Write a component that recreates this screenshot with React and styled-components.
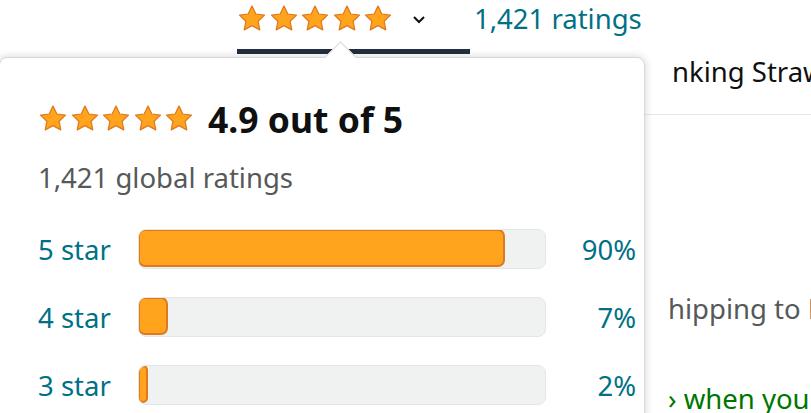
import React from 'react'
import styled, { createGlobalStyle } from 'styled-components'

const Global = createGlobalStyle`
  body { margin: 0; font-family: "Noto Sans", "Liberation Sans", sans-serif; color: #0f1111; }
`

const ratings = [
  { label: '5 star', pct: 90 },
  { label: '4 star', pct: 7 },
  { label: '3 star', pct: 2 },
]

const Star = ({ size = 30 }) => (
  <svg width={size} height={size} viewBox="0 0 24 24">
    <path
      d="M12 1.6l3.05 6.4 6.95.9-5.1 4.85 1.3 6.95L12 17.3l-6.2 3.4 1.3-6.95L2 8.9l6.95-.9z"
      fill="#ffa41c"
      stroke="#de7921"
      strokeWidth="1"
      strokeLinejoin="round"
    />
  </svg>
)

const Stars = ({ size }) => (
  <StarRow>
    {[0, 1, 2, 3, 4].map(i => <Star key={i} size={size} />)}
  </StarRow>
)

const Page = styled.div`
  position: relative;
  width: 811px;
  height: 413px;
  overflow: hidden;
  background: #fff;
`

const TopRow = styled.div`
  display: flex;
  align-items: flex-start;
  height: 57px;
  padding-left: 237px;
  box-sizing: border-box;
`

const Trigger = styled.div`
  width: 233px;
  display: flex;
  flex-direction: column;
`

const TriggerInner = styled.div`
  display: flex;
  align-items: center;
  height: 37px;
`

const Chevron = styled.svg`
  margin-left: 19px;
  margin-top: 2px;
`

const DarkBar = styled.div`
  margin-top: 12px;
  height: 5px;
  background: #232f3e;
`

const Link = styled.a`
  color: #007185;
  font-size: 27.5px;
  text-decoration: none;
  margin-left: 4px;
  line-height: 37px;
`

const StarRow = styled.div`
  display: flex;
  gap: 1.5px;
`

const Body = styled.div`
  padding-left: 672px;
  display: flex;
  flex-direction: column;
`

const Title = styled.div`
  font-size: 27.5px;
  line-height: 30px;
  white-space: nowrap;
  height: 57px;
  border-bottom: 1px solid #e7e7e7;
  margin-left: -27px;
  padding-left: 27px;
`

const Note = styled.div`
  font-size: 27.5px;
  white-space: nowrap;
  margin-left: -4px;
  color: ${p => p.$green ? '#007600' : '#565959'};
  margin-top: ${p => p.$top}px;
`

const Popover = styled.div`
  position: absolute;
  left: -1px;
  top: 57px;
  width: 646px;
  height: 420px;
  box-sizing: border-box;
  background: #fff;
  border: 1px solid #d5d9d9;
  border-radius: 8px;
  box-shadow: 0 0 8px rgba(15, 17, 17, 0.18);
  padding: 45px 8px 0 38px;
`

const Notch = styled.div`
  position: absolute;
  left: 329px;
  top: -12px;
  width: 22px;
  height: 22px;
  background: #fff;
  border-top: 1px solid #d5d9d9;
  border-left: 1px solid #d5d9d9;
  transform: rotate(45deg);
`

const Heading = styled.div`
  display: flex;
  align-items: center;
  gap: 14px;
  height: 32px;
`

const Score = styled.span`
  font-size: 35.5px;
  font-weight: 700;
  line-height: 32px;
`

const Summary = styled.div`
  margin-top: 24px;
  font-size: 27.5px;
  color: #565959;
`

const Rows = styled.div`
  margin-top: 33px;
  display: flex;
  flex-direction: column;
  gap: 28px;
`

const Row = styled.div`
  display: grid;
  grid-template-columns: 100px 408px 1fr;
  align-items: center;
  height: 40px;
`

const RowLabel = styled.span`
  font-size: 27.5px;
  color: #007185;
`

const Track = styled.div`
  height: 40px;
  box-sizing: border-box;
  background: #f0f2f2;
  border: 1px solid #e3e6e6;
  border-radius: 8px;
  overflow: hidden;
`

const Fill = styled.div`
  height: 100%;
  box-sizing: border-box;
  background: #ffa41c;
  border: 2px solid #de7921;
  border-radius: 7px;
  margin: -1px;
`

const Pct = styled.span`
  font-size: 27.5px;
  color: #007185;
  text-align: right;
`

export default function App() {
  return (
    <Page>
      <Global />
      <TopRow>
        <Trigger>
          <TriggerInner>
            <Stars size={30} />
            <Chevron width="14" height="9" viewBox="0 0 14 9">
              <path d="M2 2l5 5 5-5" fill="none" stroke="#0f1111" strokeWidth="2" />
            </Chevron>
          </TriggerInner>
          <DarkBar />
        </Trigger>
        <Link href="#">1,421 ratings</Link>
      </TopRow>
      <Body>
        <Title>nking Straws</Title>
        <Note $top={175}>hipping to Korea</Note>
        <Note $green $top={53}>› when you</Note>
      </Body>
      <Popover>
        <Notch />
        <Heading>
          <Stars size={30} />
          <Score>4.9 out of 5</Score>
        </Heading>
        <Summary>1,421 global ratings</Summary>
        <Rows>
          {ratings.map(r => (
            <Row key={r.label}>
              <RowLabel>{r.label}</RowLabel>
              <Track>
                <Fill style={{ width: `calc(${r.pct}% + 2px)` }} />
              </Track>
              <Pct>{r.pct}%</Pct>
            </Row>
          ))}
        </Rows>
      </Popover>
    </Page>
  )
}
